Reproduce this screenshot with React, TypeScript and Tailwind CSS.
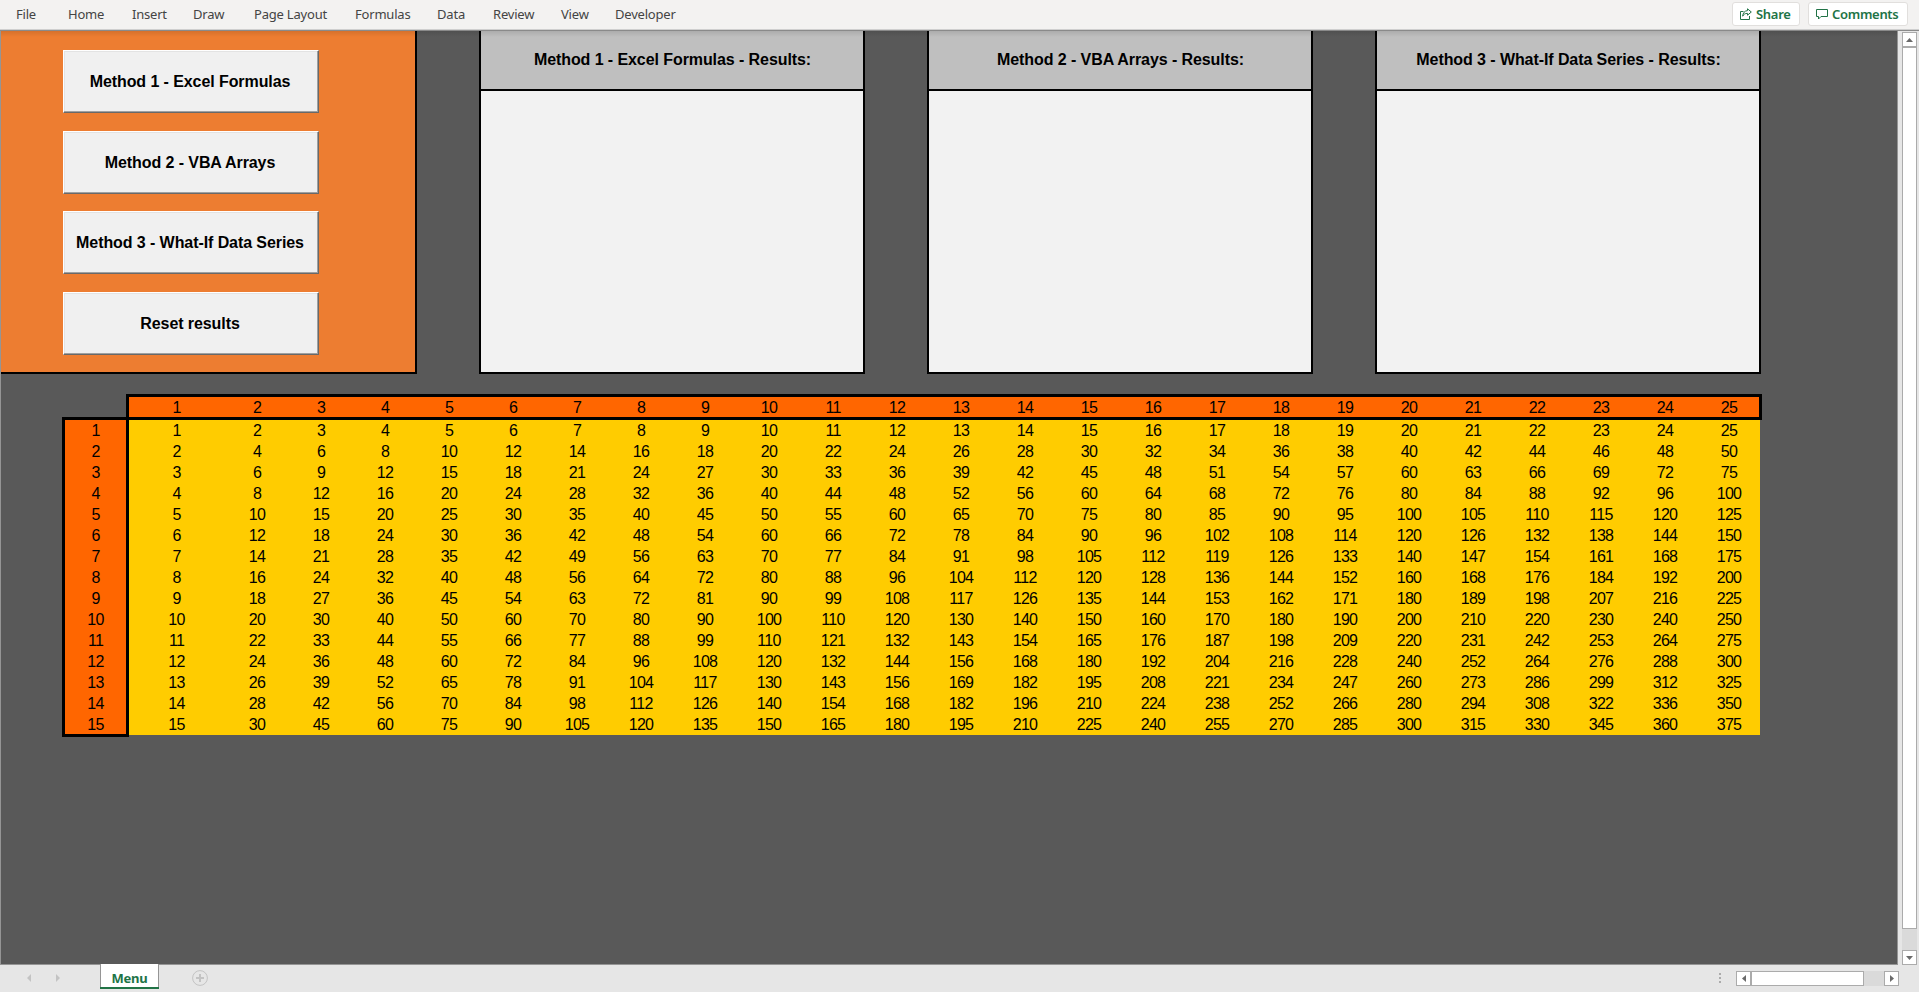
import React from "react";

const menus: [string, string][] = [
  ["File", "ml-[16px] w-[52px]"],
  ["Home", "w-[64px]"],
  ["Insert", "w-[61px]"],
  ["Draw", "w-[61px]"],
  ["Page Layout", "w-[101px]"],
  ["Formulas", "w-[82px]"],
  ["Data", "w-[56px]"],
  ["Review", "w-[68px]"],
  ["View", "w-[54px]"],
  ["Developer", "w-[90px]"],
];

const buttons: [string, string][] = [
  ["Method 1 - Excel Formulas", "mb-[18px]"],
  ["Method 2 - VBA Arrays", "mb-[17px]"],
  ["Method 3 - What-If Data Series", "mb-[18px]"],
  ["Reset results", ""],
];

const results = [
  "Method 1 - Excel Formulas - Results:",
  "Method 2 - VBA Arrays - Results:",
  "Method 3 - What-If Data Series - Results:",
];

const columns = Array.from({ length: 25 }, (_, i) => i + 1);
const rows = Array.from({ length: 15 }, (_, i) => i + 1);

function MenuBar() {
  return (
    <header className="flex h-[31px] shrink-0 items-start border-b border-[#8a8a8a] bg-[#f3f2f1] font-['Noto_Sans',sans-serif] text-[13px] text-[#444444]">
      <div className="flex h-[30px] w-full items-start border-b border-[#cfcfcf]">
        <nav className="flex grow leading-[29px] tracking-[-0.2px]">
          {menus.map(([label, width]) => (
            <span key={label} className={`${width} shrink-0 whitespace-nowrap`}>
              {label}
            </span>
          ))}
        </nav>
        <div className="flex gap-[8px] pt-[2px] pr-[11px] font-semibold tracking-[-0.3px] text-[#217346]">
          <button className="flex h-[24px] w-[68px] items-center rounded-[3px] border border-[#e1dfdd] bg-white pl-[7px]">
            <svg width="12" height="12" viewBox="0 0 12 12" fill="none" stroke="currentColor" className="mr-[4px] shrink-0">
              <path d="M3.500 3.500h-3v8h9V8" />
              <path d="M7.500.8l3.800 3.200-3.800 3.200V5.400C5 5.300 3.700 6.300 2.700 8.200 2.900 5 4.500 2.800 7.500 2.600z" />
            </svg>
            <span className="leading-none">Share</span>
          </button>
          <button className="flex h-[24px] w-[100px] items-center rounded-[3px] border border-[#e1dfdd] bg-white pl-[7px]">
            <svg width="12" height="12" viewBox="0 0 12 12" fill="none" stroke="currentColor" className="mr-[4px] shrink-0">
              <path d="M.5 1.500h11v7H5l-2.500 2.500V8.500h-2z" />
            </svg>
            <span className="leading-none">Comments</span>
          </button>
        </div>
      </div>
    </header>
  );
}

function Sheet() {
  return (
    <main className="relative h-[934px] w-[1898px] shrink-0 overflow-hidden border-r border-b border-l border-[#959595] bg-[#595959] text-[16px] text-black">
      <div className="absolute inset-x-0 top-0 h-[6px] bg-linear-to-b from-black/10 to-transparent" />
      <div className="flex gap-[62px] tracking-[-0.08px]">
        <section className="flex h-[343px] w-[416px] flex-col border-r-2 border-b-2 border-black bg-[#ed7d31] pt-[19px] pl-[62px]">
          {buttons.map(([label, gap]) => (
            <button
              key={label}
              className={`${gap} h-[63px] w-[256px] shrink-0 border border-t-white border-r-[#696969] border-b-[#696969] border-l-white bg-[#f0f0f0] pr-[2px] font-bold shadow-[inset_-1px_-1px_0_#a0a0a0,inset_1px_1px_0_#e3e3e3]`}
            >
              {label}
            </button>
          ))}
        </section>
        {results.map((title) => (
          <section key={title} className="flex h-[343px] w-[386px] flex-col border-r-2 border-b-2 border-l-2 border-black bg-[#f2f2f2]">
            <h2 className="flex h-[60px] items-center justify-center border-b-2 border-black bg-[#bfbfbf] pb-[1px] pl-[1px] font-bold">
              {title}
            </h2>
          </section>
        ))}
      </div>
      <div className="mt-[20px] ml-[61px] flex flex-col tracking-[-0.7px]">
        <div className="ml-[64px] flex h-[26px] w-[1636px] overflow-hidden border-3 border-black bg-[#ff6600] leading-[22px]">
          {columns.map((c) => (
            <span key={c} className="w-[64px] shrink-0 text-center first:mr-px first:w-[95px]">
              {c}
            </span>
          ))}
        </div>
        <div className="flex items-start leading-[21px]">
          <div className="-mt-[3px] flex w-[67px] shrink-0 flex-col border-3 border-black bg-[#ff6600] text-center">
            {rows.map((r) => (
              <span key={r} className="h-[21px] last:h-[20px]">
                {r}
              </span>
            ))}
          </div>
          <div className="w-[1631px] shrink-0 overflow-hidden bg-[#ffcc00]">
            {rows.map((r) => (
              <div key={r} className="flex h-[21px]">
                {columns.map((c) => (
                  <span key={c} className="w-[64px] shrink-0 text-center first:mr-px first:w-[95px]">
                    {r * c}
                  </span>
                ))}
              </div>
            ))}
          </div>
        </div>
      </div>
    </main>
  );
}

function VerticalScroll() {
  return (
    <div className="mt-[1px] ml-[4px] flex h-[933px] w-[15px] flex-col bg-[#dadada]">
      <div className="flex h-[15px] items-center justify-center border border-[#ababab] bg-white">
        <svg width="7" height="4" viewBox="0 0 7 4" fill="#6a6a6a"><path d="M0 4L3.500 0 7 4z" /></svg>
      </div>
      <div className="h-[882px] border border-[#ababab] bg-white" />
      <div className="mt-auto flex h-[15px] items-center justify-center border border-[#ababab] bg-white">
        <svg width="7" height="4" viewBox="0 0 7 4" fill="#6a6a6a"><path d="M0 0h7L3.500 4z" /></svg>
      </div>
    </div>
  );
}

function TabBar() {
  return (
    <footer className="flex h-[27px] items-start">
      <svg width="4" height="8" viewBox="0 0 4 8" fill="#c3c3c3" className="mt-[9px] ml-[27px]"><path d="M4 0v8L0 4z" /></svg>
      <svg width="4" height="8" viewBox="0 0 4 8" fill="#c3c3c3" className="mt-[9px] ml-[25px]"><path d="M0 0v8L4 4z" /></svg>
      <div className="relative -mt-px ml-[40px] flex h-[25px] w-[59px] flex-col">
        <div className="flex h-[23px] items-center justify-center border-r border-l border-[#959595] bg-white pt-[5px] font-['Noto_Sans',sans-serif] text-[13px] leading-[18px] font-bold tracking-[-0.2px] text-[#217346]">
          Menu
        </div>
        <div className="h-[2px] bg-[#217346]" />
      </div>
      <svg width="16" height="16" viewBox="0 0 16 16" fill="none" stroke="#c3c3c3" className="mt-[5px] ml-[33px]">
        <circle cx="8" cy="8" r="7.400" />
        <path d="M8 4v8M4 8h8" strokeWidth="2" />
      </svg>
      <div className="mt-[8px] ml-auto flex flex-col gap-[2px]">
        <i className="size-[2px] bg-[#ababab]" />
        <i className="size-[2px] bg-[#ababab]" />
        <i className="size-[2px] bg-[#ababab]" />
      </div>
      <div className="mt-[6px] mr-[20px] ml-[15px] flex h-[15px] w-[163px] bg-[#dadada]">
        <div className="flex w-[15px] items-center justify-center border border-[#ababab] bg-white">
          <svg width="4" height="7" viewBox="0 0 4 7" fill="#6a6a6a"><path d="M4 0v7L0 3.500z" /></svg>
        </div>
        <div className="w-[113px] border border-[#ababab] bg-white" />
        <div className="ml-auto flex w-[15px] items-center justify-center border border-[#ababab] bg-white">
          <svg width="4" height="7" viewBox="0 0 4 7" fill="#6a6a6a"><path d="M0 0v7l4-3.500z" /></svg>
        </div>
      </div>
    </footer>
  );
}

export default function App() {
  return (
    <div className="flex h-[992px] w-[1919px] flex-col overflow-hidden bg-[#e6e6e6] font-['Liberation_Sans',Arial,sans-serif]">
      <MenuBar />
      <div className="flex h-[934px] shrink-0">
        <Sheet />
        <VerticalScroll />
      </div>
      <TabBar />
    </div>
  );
}
